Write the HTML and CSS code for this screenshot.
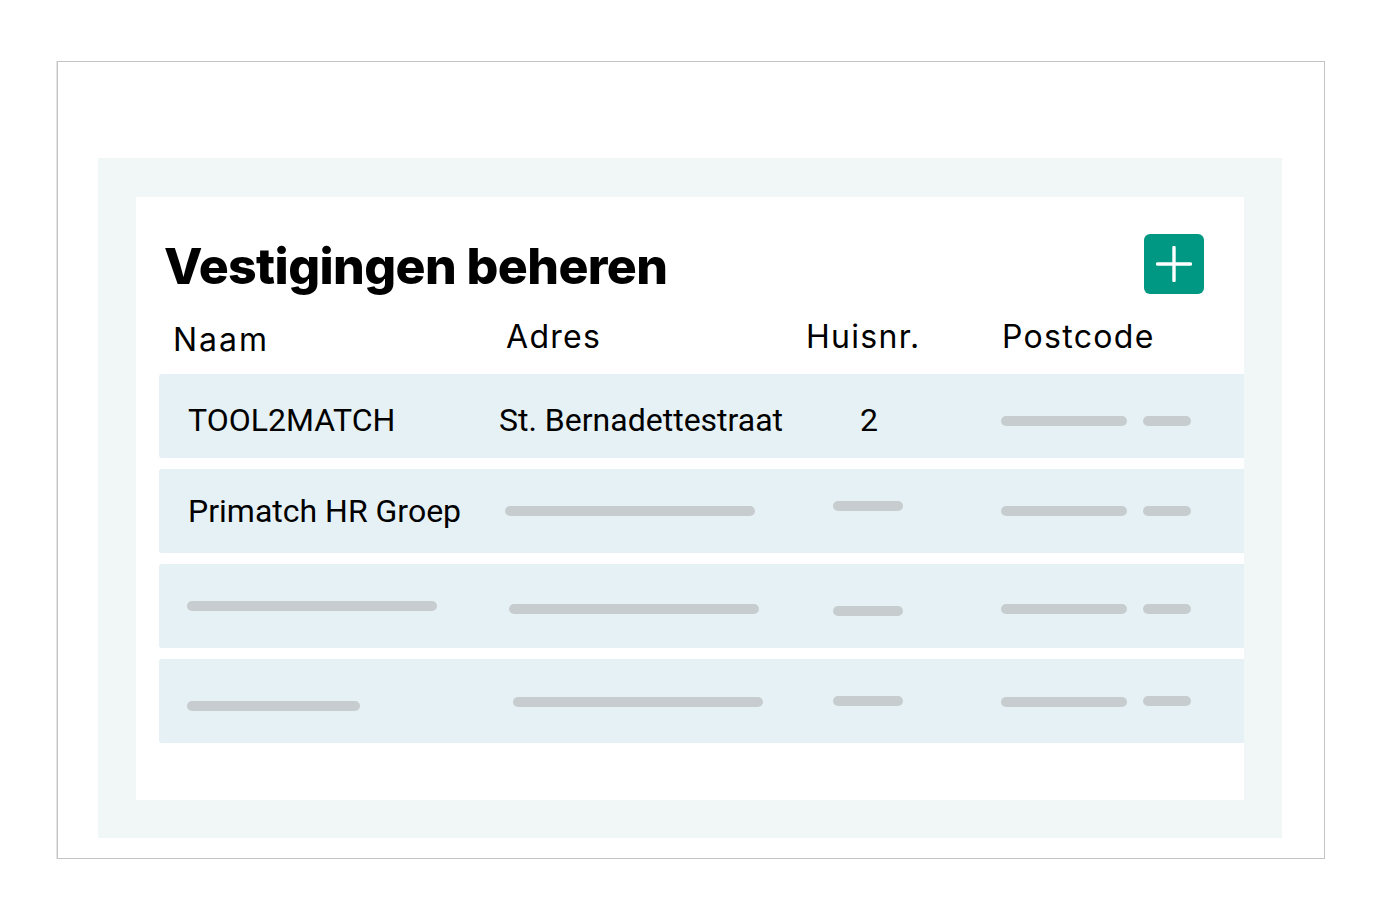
FILE: index.html
```html
<!DOCTYPE html>
<html lang="nl">
<head>
    <meta charset="UTF-8">
    <meta name="viewport" content="width=device-width, initial-scale=1.0">
    <link rel="stylesheet" href="styles.css">
    <title>Vestigingen beheren</title>
</head>
<body>
    <div class="frame">
        <div class="panel">
            <div class="card">
                <div class="card-header">
                    <h1>Vestigingen beheren</h1>
                    <button class="add-btn" aria-label="Vestiging toevoegen">
                        <svg width="36" height="36" viewBox="0 0 36 36">
                            <path d="M18 1.5v33M1.5 18h33" stroke="#fff" stroke-width="3.4" stroke-linecap="round" fill="none"/>
                        </svg>
                    </button>
                </div>

                <div class="table-head">
                    <span class="th th-naam">Naam</span>
                    <span class="th">Adres</span>
                    <span class="th">Huisnr.</span>
                    <span class="th">Postcode</span>
                </div>

                <div class="rows">
                    <div class="row row-first">
                        <div class="cell">TOOL2MATCH</div>
                        <div class="cell">St. Bernadettestraat</div>
                        <div class="cell cell-nr">2</div>
                        <div class="cell cell-pc">
                            <span class="bar bar-pc down"></span>
                            <span class="bar bar-pc-sm down"></span>
                        </div>
                    </div>
                    <div class="row">
                        <div class="cell">Primatch HR Groep</div>
                        <div class="cell"><span class="bar bar-adres"></span></div>
                        <div class="cell cell-nr"><span class="bar bar-nr up"></span></div>
                        <div class="cell cell-pc">
                            <span class="bar bar-pc"></span>
                            <span class="bar bar-pc-sm"></span>
                        </div>
                    </div>
                    <div class="row">
                        <div class="cell"><span class="bar bar-naam"></span></div>
                        <div class="cell"><span class="bar bar-adres shift-2 down-sm"></span></div>
                        <div class="cell cell-nr"><span class="bar bar-nr down"></span></div>
                        <div class="cell cell-pc">
                            <span class="bar bar-pc down-sm"></span>
                            <span class="bar bar-pc-sm down-sm"></span>
                        </div>
                    </div>
                    <div class="row">
                        <div class="cell"><span class="bar bar-naam-sm down"></span></div>
                        <div class="cell"><span class="bar bar-adres shift-3 down-xs"></span></div>
                        <div class="cell cell-nr"><span class="bar bar-nr"></span></div>
                        <div class="cell cell-pc">
                            <span class="bar bar-pc down-xs"></span>
                            <span class="bar bar-pc-sm"></span>
                        </div>
                    </div>
                </div>
            </div>
        </div>
    </div>
</body>
</html>
```

FILE: styles.css
```css
/* Global */
body {
    margin: 0;
    padding: 0;
    background-color: #ffffff;
    font-family: 'Inter', 'Noto Sans', sans-serif;
    color: #000000;
}

/* Outer frame */
.frame {
    box-sizing: border-box;
    width: 1268px;
    height: 798px;
    margin: 61px 0 0 57px;
    padding: 96px 42px 20px 40px;
    border: 1px solid #c4c4c4;
    box-shadow: -1px 0 0 #e6e6e6;
}

.panel {
    box-sizing: border-box;
    height: 680px;
    padding: 39px 38px 38px 38px;
    background-color: #f1f7f7;
}

.card {
    box-sizing: border-box;
    height: 603px;
    padding: 37px 0 0 23px;
    background-color: #ffffff;
}

/* Title */
.card-header {
    display: flex;
    align-items: center;
    justify-content: space-between;
    height: 60px;
    padding-right: 40px;
}

h1 {
    margin: 0 0 0 5px;
    font-size: 50px;
    font-weight: 800;
    line-height: 60px;
    letter-spacing: -0.6px;
    transform: translateY(2px);
}

.add-btn {
    display: flex;
    align-items: center;
    justify-content: center;
    width: 60px;
    height: 60px;
    padding: 0;
    border: none;
    border-radius: 6px;
    background-color: #009883;
}

/* Column labels */
.table-head {
    display: grid;
    grid-template-columns: 333px 300px 196px 1fr;
    box-sizing: border-box;
    height: 80px;
    padding: 24px 0 0 14px;
}

.th {
    font-size: 32px;
    font-weight: 400;
    line-height: 38px;
    letter-spacing: 1.3px;
}

.th-naam {
    padding-top: 3px;
    letter-spacing: 2px;
}

/* Rows */
.rows {
    display: flex;
    flex-direction: column;
    gap: 11px;
}

.row {
    display: grid;
    grid-template-columns: 311px 310px 118px 1fr;
    align-items: center;
    height: 84px;
    padding-left: 29px;
    border-radius: 3px 0 0 3px;
    background-color: #e6f1f5;
    font-family: 'Roboto', sans-serif;
    font-size: 32px;
}

.cell {
    display: flex;
    align-items: center;
}

.row-first .cell {
    padding-top: 8px;
}

.row-first .cell-pc {
    padding-top: 0;
}

.cell-nr {
    justify-content: center;
    padding-left: 2px;
}

.cell-pc {
    gap: 16px;
    padding-left: 74px;
}

/* Placeholder bars */
.bar {
    display: block;
    height: 10px;
    border-radius: 5px;
    background-color: #c7cdcf;
}

.bar-naam { width: 250px; margin-left: -1px; }
.bar-naam-sm { width: 173px; margin-left: -1px; }
.bar-adres { width: 250px; margin-left: 6px; }
.bar-nr { width: 70px; margin-left: -2px; }
.bar-pc { width: 126px; }
.bar-pc-sm { width: 48px; }

.shift-2 { margin-left: 10px; }
.shift-3 { margin-left: 14px; }

.up { transform: translateY(-5px); }
.down-xs { transform: translateY(1px); }
.down-sm { transform: translateY(3px); }
.down { transform: translateY(5px); }
```
